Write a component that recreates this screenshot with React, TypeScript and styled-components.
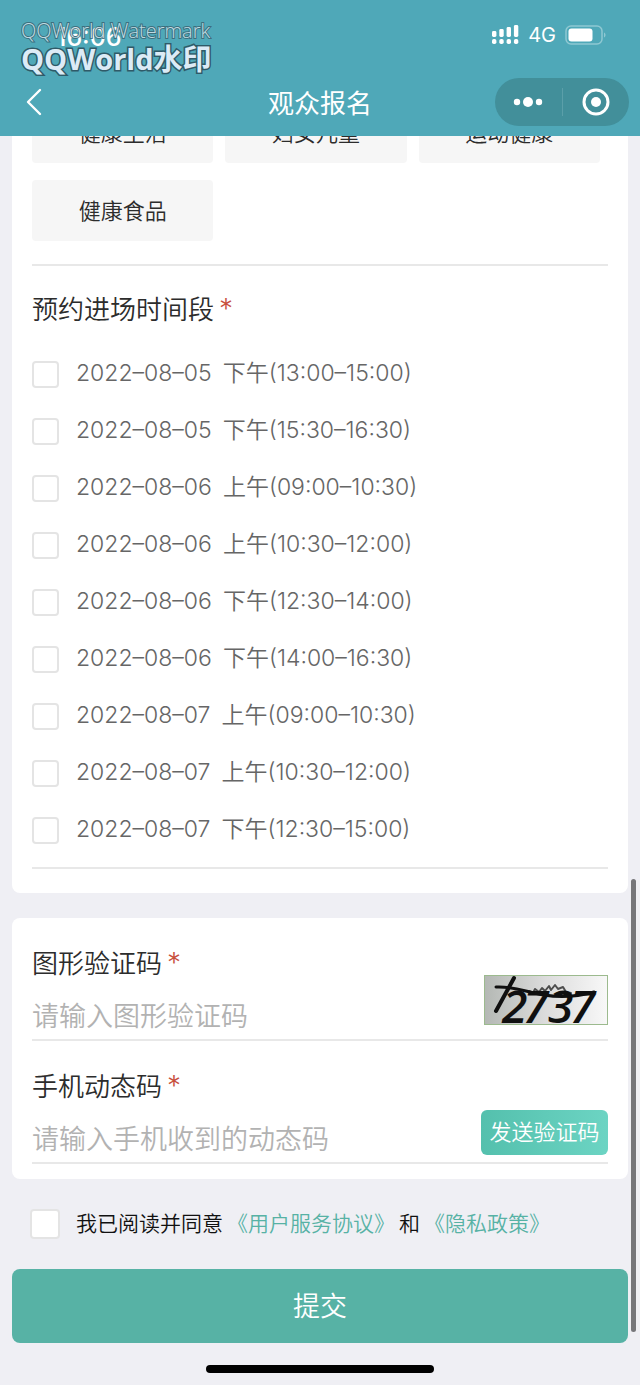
import React from "react";
import styled, { createGlobalStyle } from "styled-components";

const GlobalStyle = createGlobalStyle`
  *, *::before, *::after { box-sizing: border-box; }
  body {
    margin: 0;
    background: #efeff4;
    color: #2c2c2c;
    font-family: Inter, "Noto Sans CJK SC", sans-serif;
    font-weight: 350;
  }
  button, input { font: inherit; }
`;

const Screen = styled.div`
  position: relative;
  min-height: 100vh;
  overflow: hidden;
  display: flex;
  flex-direction: column;
`;

const Header = styled.header`
  position: sticky;
  top: 0;
  z-index: 2;
  height: 136px;
  background: #4fa8b8;
  color: #fff;
  display: flex;
  flex-direction: column;
`;

const StatusBar = styled.div`
  height: 68px;
  padding: 2px 34px 0 56px;
  display: flex;
  align-items: center;
  justify-content: space-between;
`;

const Clock = styled.span`
  font-size: 25px;
  font-weight: 500;
  padding-top: 4px;
`;

const StatusIcons = styled.div`
  display: flex;
  align-items: center;
  gap: 9px;
  font-size: 20px;
  font-weight: 400;
`;

const NavBar = styled.div`
  height: 68px;
  padding: 0 11px 0 16px;
  display: grid;
  grid-template-columns: 1fr auto 1fr;
  align-items: center;
`;

const IconButton = styled.button`
  border: 0;
  padding: 0;
  background: none;
  color: inherit;
  display: flex;
  align-items: center;
  justify-content: center;
`;

const BackButton = styled(IconButton)`
  width: 36px;
  height: 44px;
`;

const Title = styled.h1`
  margin: 0;
  padding: 4px 5px 0 0;
  font-size: 26px;
  line-height: 40px;
  font-weight: 400;
`;

const Capsule = styled.div`
  justify-self: end;
  width: 134px;
  height: 48px;
  border-radius: 24px;
  background: #428f9a;
  display: grid;
  grid-template-columns: 1fr 1px 1fr;
  align-items: center;
`;

const CapsuleLine = styled.span`
  height: 28px;
  background: #5b9fa9;
`;

const Watermark = styled.div`
  position: absolute;
  left: 21px;
  top: 18px;
  z-index: 3;
  font-family: "Open Sans", "Noto Sans CJK SC", sans-serif;
  paint-order: stroke fill;
`;

const WatermarkSmall = styled.div`
  font-size: 20px;
  line-height: 26px;
  font-weight: 300;
  color: #d3e4ea;
  opacity: 0.85;
  -webkit-text-stroke: 2px #3a6675;
`;

const WatermarkLarge = styled.div`
  font-size: 29px;
  line-height: 30px;
  font-weight: 700;
  color: #dcebf6;
  -webkit-text-stroke: 3px #2f5a68;
`;

const Content = styled.main`
  margin-top: -34px;
  padding: 0 12px;
  display: flex;
  flex-direction: column;
`;

const Card = styled.section`
  background: #fff;
  border-radius: 8px;
  padding: 0 20px;
`;

const TopicCard = styled(Card)`
  padding-bottom: 24px;
`;

const CodeCard = styled(Card)`
  margin-top: 25px;
  padding-bottom: 15px;
`;

const ChipGrid = styled.div`
  display: grid;
  grid-template-columns: repeat(3, 1fr);
  gap: 17px 12px;
  padding: 0 8px 23px 0;
  border-bottom: 2px solid #e8e8e8;
`;

const Chip = styled.button`
  height: 61px;
  padding: 0 0 4px;
  border: 0;
  border-radius: 4px;
  background: #f6f6f6;
  color: #2c2c2c;
  font-size: 22px;
`;

const SlotSet = styled.fieldset`
  margin: 0;
  padding: 24px 0 8px;
  border: 0;
  border-bottom: 2px solid #e8e8e8;
`;

const Legend = styled.legend`
  float: left;
  width: 100%;
  padding: 0;
  margin-bottom: 17px;
  font-size: 26px;
  line-height: 39px;
`;

const Star = styled.span`
  margin-left: 5px;
  color: #c8503c;
  font-size: 28px;
  line-height: 28px;
  font-weight: 350;
`;

const SlotRow = styled.label`
  clear: both;
  height: 57px;
  display: flex;
  align-items: center;
  gap: 17px;
  color: #666;
  font-size: 23px;
  line-height: 32px;
`;

const SlotText = styled.span`
  display: flex;
  gap: 11px;
  padding-bottom: 3px;
`;

const CheckBox = styled.input<{ $size: number }>`
  appearance: none;
  flex: none;
  width: ${(p) => p.$size}px;
  height: ${(p) => p.$size}px;
  margin: 0;
  border: 2px solid #e4e4e4;
  border-radius: 4px;
  background: #fff;
  &:checked { background: #57b2a5; }
`;

const Field = styled.div`
  height: 123px;
  padding-top: 26px;
  border-bottom: 2px solid #e8e8e8;
  display: grid;
  grid-template-columns: 1fr auto;
  grid-template-rows: 39px 1fr;
`;

const FieldLabel = styled.label`
  grid-column: 1;
  font-size: 26px;
  line-height: 39px;
`;

const FieldInput = styled.input`
  grid-column: 1;
  grid-row: 2;
  width: 100%;
  min-width: 0;
  height: 40px;
  margin-top: 13px;
  padding: 0;
  border: 0;
  outline: 0;
  background: none;
  color: #2c2c2c;
  font-size: 27px;
  &::placeholder { color: #b2b2b2; opacity: 1; }
`;

const FieldSide = styled.div`
  grid-column: 2;
  grid-row: 1 / 3;
  align-self: end;
`;

const Captcha = styled.svg`
  display: block;
  margin-bottom: 14px;
  overflow: visible;
`;

const SendButton = styled.button`
  display: block;
  width: 127px;
  height: 45px;
  margin-bottom: 7px;
  padding: 0 0 5px;
  border: 0;
  border-radius: 6px;
  background: linear-gradient(90deg, #54c0ad, #6cd4c3);
  color: #fff;
  font-size: 22px;
`;

const Agreement = styled.div`
  padding: 29px 18px;
  display: flex;
  align-items: center;
  gap: 16px;
  color: #111;
  font-size: 21px;
  line-height: 32px;
`;

const DocLink = styled.a`
  margin: 0 4px;
  color: #57b2a5;
  text-decoration: none;
`;

const SubmitButton = styled.button`
  height: 74px;
  padding: 0 0 4px;
  border: 0;
  border-radius: 8px;
  background: #57b2a5;
  color: #fff;
  font-size: 27px;
`;

const HomeIndicator = styled.div`
  width: 228px;
  height: 8px;
  margin: 22px auto 12px;
  border-radius: 4px;
  background: #000;
`;

const ScrollThumb = styled.div`
  position: absolute;
  right: 4px;
  top: 879px;
  width: 5px;
  height: 453px;
  border-radius: 3px;
  background: #76767a;
`;

const topics = ["健康生活", "妇女儿童", "运动健康", "健康食品"];

const slots = [
  { date: "2022–08–05", time: "下午(13:00–15:00)" },
  { date: "2022–08–05", time: "下午(15:30–16:30)" },
  { date: "2022–08–06", time: "上午(09:00–10:30)" },
  { date: "2022–08–06", time: "上午(10:30–12:00)" },
  { date: "2022–08–06", time: "下午(12:30–14:00)" },
  { date: "2022–08–06", time: "下午(14:00–16:30)" },
  { date: "2022–08–07", time: "上午(09:00–10:30)" },
  { date: "2022–08–07", time: "上午(10:30–12:00)" },
  { date: "2022–08–07", time: "下午(12:30–15:00)" },
];

function SignalIcon() {
  return (
    <svg width="28" height="20" viewBox="0 0 28 20" fill="#fff" aria-hidden="true">
      {[0, 1, 2, 3].map((i) => (
        <g key={i}>
          <rect x={i * 7.3 + 1} y={6 - i * 2} width="4.4" height={6 + i * 2} rx="1.4" />
          <rect x={i * 7.3 + 1} y="14" width="4.4" height="5" rx="1.8" />
        </g>
      ))}
    </svg>
  );
}

function BatteryIcon() {
  return (
    <svg width="41" height="20" viewBox="0 0 41 20" aria-hidden="true">
      <rect x="1" y="1" width="36" height="18" rx="5" fill="none" stroke="#8fc8d2" strokeWidth="1.5" />
      <rect x="3.5" y="3.5" width="24" height="13" rx="3" fill="#fff" />
      <path d="M39 7.5c2 .8 2 4.2 0 5z" fill="#8fc8d2" />
    </svg>
  );
}

function CaptchaImage() {
  return (
    <Captcha width="124" height="50" viewBox="0 0 124 50" role="img" aria-label="图形验证码">
      <defs>
        <linearGradient id="paper" x1="0" y1="0" x2="1" y2="0">
          <stop offset="0" stopColor="#b4b8b4" />
          <stop offset="0.5" stopColor="#dcdcdc" />
          <stop offset="1" stopColor="#f8f8f8" />
        </linearGradient>
      </defs>
      <rect x="0.5" y="0.5" width="123" height="49" fill="url(#paper)" stroke="#9cba8e" />
      <g fontFamily="Open Sans, sans-serif" fontStyle="italic" fontWeight="600" fontSize="46" fill="#101010">
        <text x="18" y="48">2</text>
        <text x="39" y="48">7</text>
        <text x="64" y="48">3</text>
        <text x="86" y="48">7</text>
      </g>
      <g fill="none" stroke="#101010" strokeLinecap="round" strokeLinejoin="round">
        <path d="M30 3L12 36" strokeWidth="4" />
        <path d="M12 12C30 11 42 17 60 20S92 22 110 17" strokeWidth="3" />
        <path d="M45 16l4 2 2-4 4 3 3-4 3 3 4-5 2 4 4-5 3 4 5-2 3 5 5 1" strokeWidth="2" opacity="0.7" />
      </g>
    </Captcha>
  );
}

export default function App() {
  return (
    <>
      <GlobalStyle />
      <Screen>
        <Header>
          <StatusBar>
            <Clock>16:06</Clock>
            <StatusIcons>
              <SignalIcon />
              <span>4G</span>
              <BatteryIcon />
            </StatusIcons>
          </StatusBar>
          <NavBar>
            <BackButton type="button" aria-label="返回">
              <svg width="16" height="28" viewBox="0 0 16 28" fill="none" stroke="#fff" strokeWidth="2.4" strokeLinecap="round" strokeLinejoin="round">
                <path d="M14 2L2 14L14 26" />
              </svg>
            </BackButton>
            <Title>观众报名</Title>
            <Capsule>
              <IconButton type="button" aria-label="更多">
                <svg width="30" height="12" viewBox="0 0 30 12" fill="#fff">
                  <circle cx="4" cy="6" r="3.2" />
                  <circle cx="15" cy="6" r="5" />
                  <circle cx="26" cy="6" r="3.2" />
                </svg>
              </IconButton>
              <CapsuleLine />
              <IconButton type="button" aria-label="关闭">
                <svg width="28" height="28" viewBox="0 0 28 28">
                  <circle cx="14" cy="14" r="12" fill="none" stroke="#fff" strokeWidth="3" />
                  <circle cx="14" cy="14" r="5" fill="#fff" />
                </svg>
              </IconButton>
            </Capsule>
          </NavBar>
        </Header>
        <Watermark>
          <WatermarkSmall>QQWorld Watermark</WatermarkSmall>
          <WatermarkLarge>QQWorld水印</WatermarkLarge>
        </Watermark>

        <Content>
          <TopicCard>
            <ChipGrid>
              {topics.map((t) => (
                <Chip key={t} type="button">{t}</Chip>
              ))}
            </ChipGrid>
            <SlotSet>
              <Legend>预约进场时间段<Star>*</Star></Legend>
              {slots.map((s) => (
                <SlotRow key={s.date + s.time}>
                  <CheckBox type="checkbox" $size={27} />
                  <SlotText>
                    <span>{s.date}</span>
                    <span>{s.time}</span>
                  </SlotText>
                </SlotRow>
              ))}
            </SlotSet>
          </TopicCard>

          <CodeCard>
            <Field>
              <FieldLabel htmlFor="captcha">图形验证码<Star>*</Star></FieldLabel>
              <FieldInput id="captcha" placeholder="请输入图形验证码" />
              <FieldSide><CaptchaImage /></FieldSide>
            </Field>
            <Field>
              <FieldLabel htmlFor="sms">手机动态码<Star>*</Star></FieldLabel>
              <FieldInput id="sms" placeholder="请输入手机收到的动态码" />
              <FieldSide><SendButton type="button">发送验证码</SendButton></FieldSide>
            </Field>
          </CodeCard>

          <Agreement>
            <CheckBox id="agree" type="checkbox" $size={30} />
            <label htmlFor="agree">
              我已阅读并同意<DocLink href="#terms">《用户服务协议》</DocLink>和<DocLink href="#privacy">《隐私政策》</DocLink>
            </label>
          </Agreement>

          <SubmitButton type="button">提交</SubmitButton>
        </Content>
        <HomeIndicator />
        <ScrollThumb />
      </Screen>
    </>
  );
}
